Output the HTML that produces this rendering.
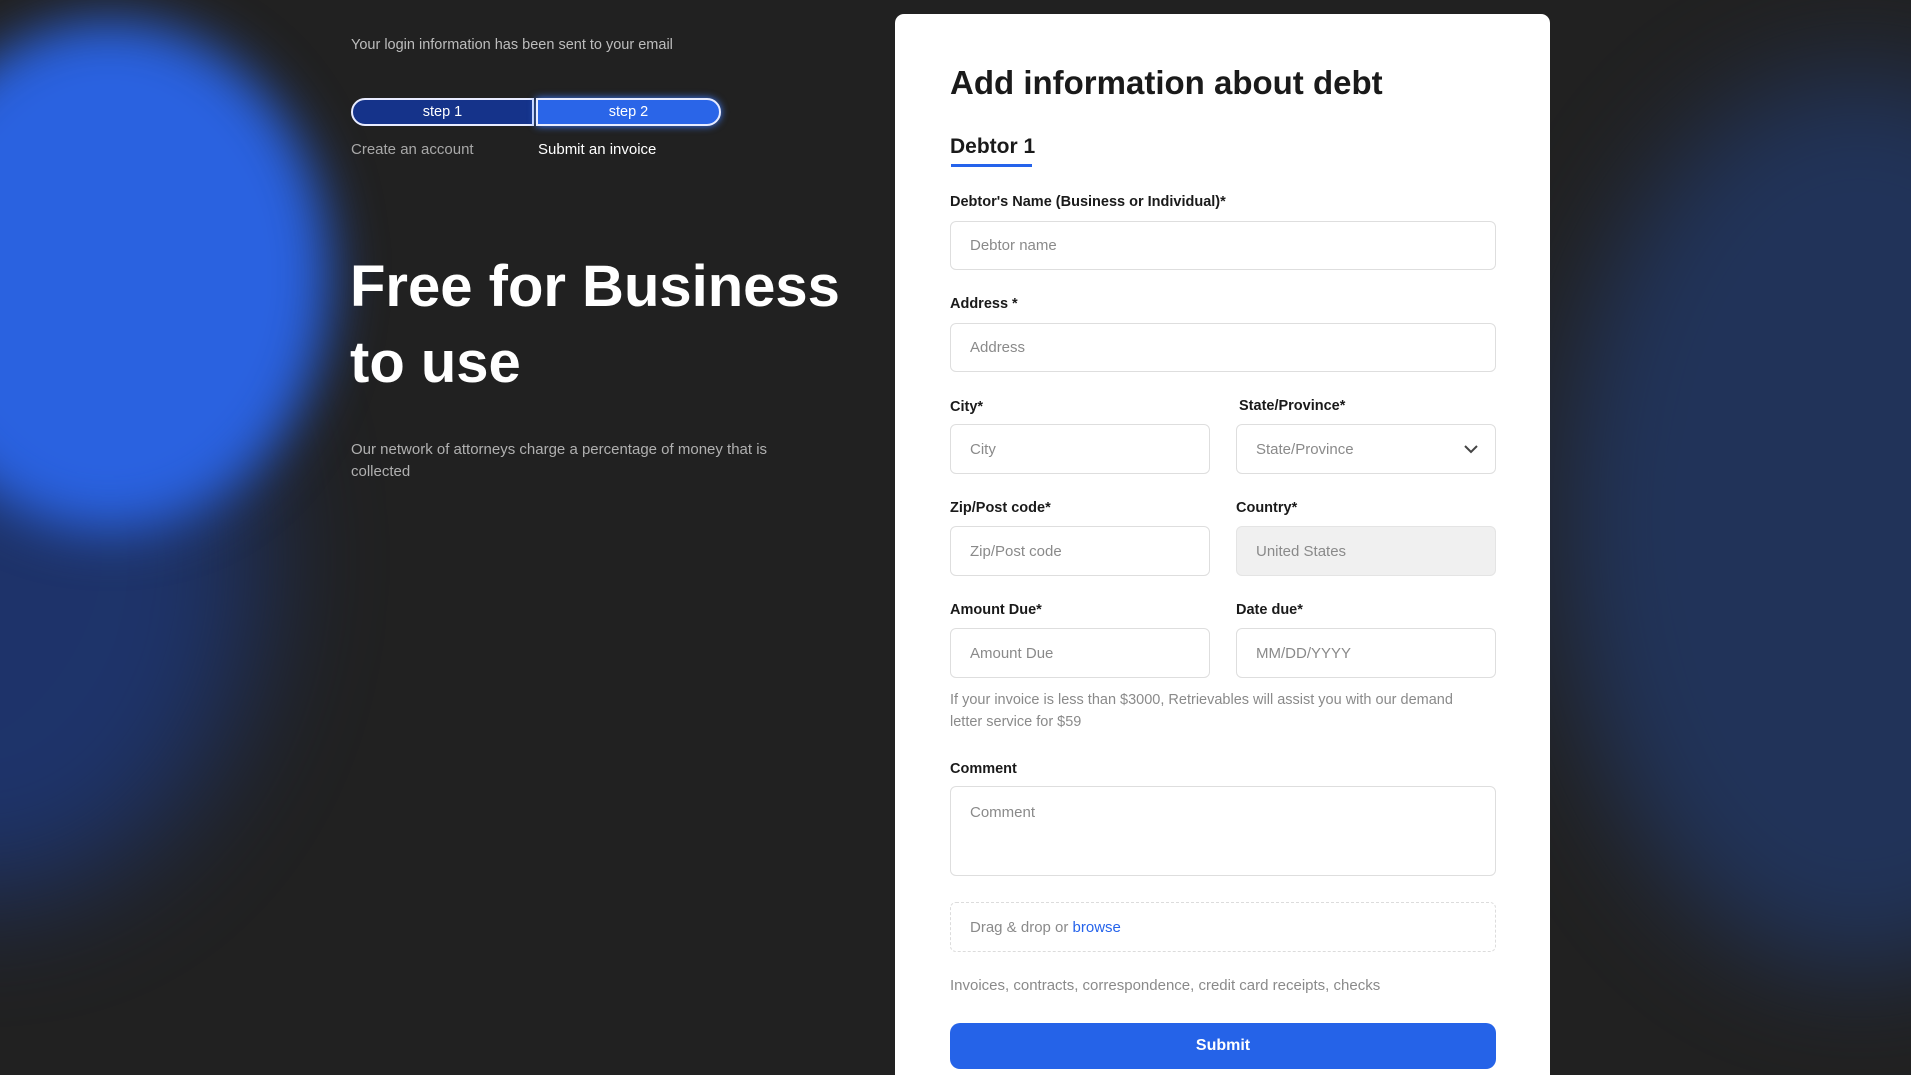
<!DOCTYPE html>
<html style="overflow:hidden;height:1075px"><head><meta charset="utf-8"><style>
*{box-sizing:border-box;margin:0;padding:0}
body{width:1911px;height:1075px;overflow:hidden;background:#212121;font-family:"Liberation Sans",sans-serif;position:relative}
.a{position:absolute}
.blob1{left:-110px;top:20px;width:440px;height:510px;border-radius:50%;background:#2a62e0;filter:blur(26px)}
.blob1b{left:-300px;top:220px;width:560px;height:680px;border-radius:50%;background:#1d3c8a;filter:blur(60px);opacity:.7}
.blob2{left:1560px;top:70px;width:600px;height:900px;border-radius:50%;background:#22407f;filter:blur(55px);opacity:.6}
.card{left:895px;top:14px;width:655px;height:1100px;background:#fff;border-radius:9px}
.lbl{font-size:14.5px;font-weight:bold;color:#1a1a1a}
.inp{border:1px solid #dedede;border-radius:6px;background:#fff;font-size:15px;color:#8a8a8a;padding-left:19px;display:flex;align-items:center}
.ph{font-size:15px;color:#8a8a8a}
</style></head><body>
<div class="a blob1b"></div>
<div class="a blob1"></div>
<div class="a blob2"></div>

<div class="a" style="left:351px;top:37px;font-size:14.5px;color:#bdbdbd">Your login information has been sent to your email</div>
<div class="a" style="left:351px;top:98px;width:183px;height:28px;border:2px solid #e8ecff;border-radius:14px 0 0 14px;background:#15338a;color:#fff;font-size:14.5px;display:flex;align-items:center;justify-content:center">step 1</div>
<div class="a" style="left:536px;top:98px;width:185px;height:28px;border:2px solid #e8ecff;border-radius:0 14px 14px 0;background:#2a65e8;color:#fff;font-size:14.5px;display:flex;align-items:center;justify-content:center;box-shadow:0 0 8px #3d7bff">step 2</div>
<div class="a" style="left:351px;top:141px;font-size:15px;color:#a8a8a8">Create an account</div>
<div class="a" style="left:538px;top:141px;font-size:15px;color:#fff">Submit an invoice</div>
<div class="a" style="left:350px;top:249px;font-size:58px;font-weight:bold;color:#fff;line-height:76px">Free for Business<br>to use</div>
<div class="a" style="left:351px;top:439px;width:440px;font-size:15px;color:#b0b0b0;line-height:22px">Our network of attorneys charge a percentage of money that is collected</div>

<div class="a card"></div>
<div class="a" style="left:950px;top:64px;font-size:33px;font-weight:bold;color:#1a1a1a">Add information about debt</div>
<div class="a" style="left:950px;top:135px;font-size:21px;font-weight:bold;color:#1a1a1a">Debtor 1</div>
<div class="a" style="left:951px;top:164px;width:81px;height:3px;background:#2563eb"></div>

<div class="a lbl" style="left:950px;top:194px">Debtor's Name (Business or Individual)*</div>
<div class="a inp" style="left:950px;top:221px;width:546px;height:49px">Debtor name</div>
<div class="a lbl" style="left:950px;top:296px">Address *</div>
<div class="a inp" style="left:950px;top:323px;width:546px;height:49px">Address</div>

<div class="a lbl" style="left:950px;top:399px">City*</div>
<div class="a inp" style="left:950px;top:424px;width:260px;height:50px">City</div>
<div class="a lbl" style="left:1239px;top:398px">State/Province*</div>
<div class="a inp" style="left:1236px;top:424px;width:260px;height:50px">State/Province
<svg class="a" style="right:16px;top:18px" width="16" height="12" viewBox="0 0 16 12"><path d="M2 3l6 6 6-6" stroke="#444" stroke-width="2" fill="none"/></svg></div>

<div class="a lbl" style="left:950px;top:500px">Zip/Post code*</div>
<div class="a inp" style="left:950px;top:526px;width:260px;height:50px">Zip/Post code</div>
<div class="a lbl" style="left:1236px;top:500px">Country*</div>
<div class="a inp" style="left:1236px;top:526px;width:260px;height:50px;background:#f0f0f0;border-color:#e4e4e4">United States</div>

<div class="a lbl" style="left:950px;top:602px">Amount Due*</div>
<div class="a inp" style="left:950px;top:628px;width:260px;height:50px">Amount Due</div>
<div class="a lbl" style="left:1236px;top:602px">Date due*</div>
<div class="a inp" style="left:1236px;top:628px;width:260px;height:50px">MM/DD/YYYY</div>

<div class="a" style="left:950px;top:689px;width:525px;font-size:14.5px;color:#8a8a8a;line-height:22px">If your invoice is less than $3000, Retrievables will assist you with our demand letter service for $59</div>

<div class="a lbl" style="left:950px;top:761px">Comment</div>
<div class="a inp" style="left:950px;top:786px;width:546px;height:90px;align-items:flex-start;padding-top:17px">Comment</div>

<div class="a inp" style="left:950px;top:902px;width:546px;height:50px;border:1px dashed #dcdcdc">Drag &amp; drop or&nbsp;<span style="color:#2563eb">browse</span></div>
<div class="a ph" style="left:950px;top:977px">Invoices, contracts, correspondence, credit card receipts, checks</div>

<div class="a" style="left:950px;top:1023px;width:546px;height:46px;background:#2563e8;border-radius:10px;color:#fff;font-size:16px;font-weight:bold;display:flex;align-items:center;justify-content:center">Submit</div>
</body></html>
